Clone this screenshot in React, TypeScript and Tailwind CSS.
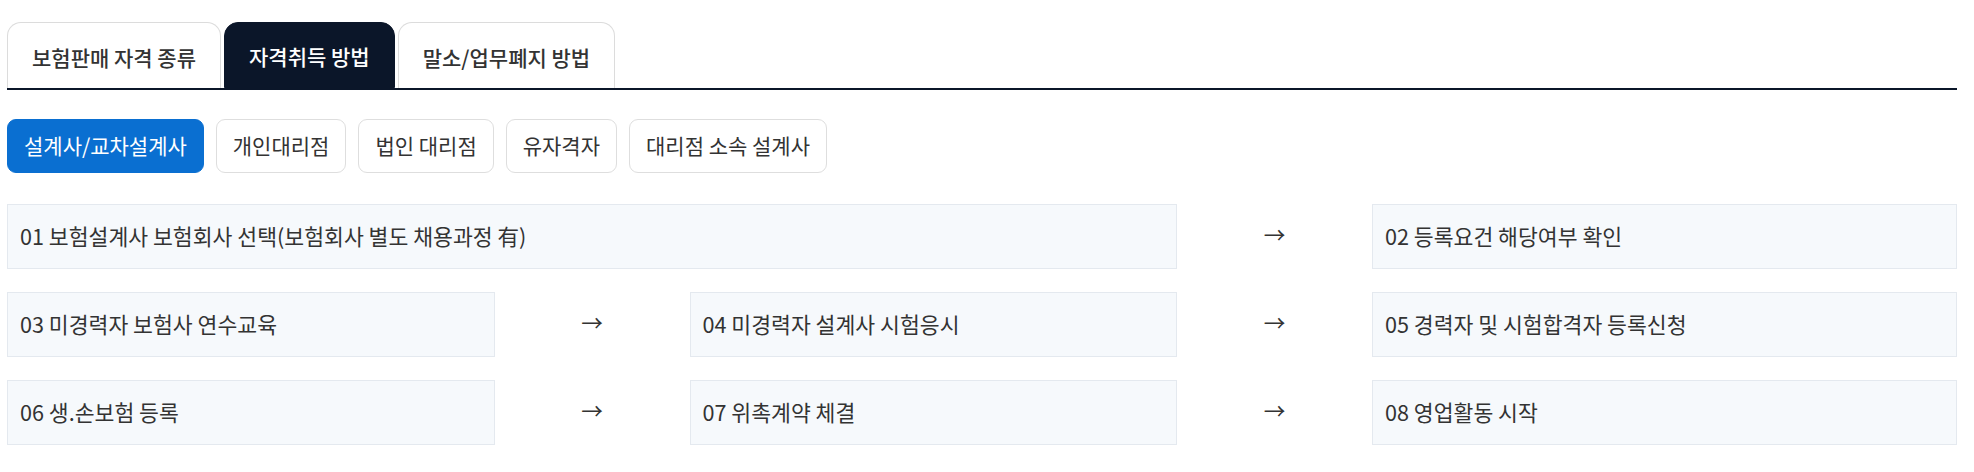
import React, { useState } from 'react';

const tabs = ['보험판매 자격 종류', '자격취득 방법', '말소/업무폐지 방법'];
const types = ['설계사/교차설계사', '개인대리점', '법인 대리점', '유자격자', '대리점 소속 설계사'];

const StepBox: React.FC<{ label: string; className?: string }> = ({ label, className = '' }) => (
  <div className={`h-[65px] flex items-center pl-3 bg-[#f6f9fc] border border-[#e4e9ef] text-[21.6px] text-[#333] ${className}`}>
    {label}
  </div>
);

const Arrow: React.FC = () => (
  <div className="h-[65px] flex items-center justify-center text-[21.6px] text-[#333] pb-1">→</div>
);

const App: React.FC = () => {
  const [activeTab, setActiveTab] = useState(1);
  const [activeType, setActiveType] = useState(0);

  return (
    <div className="min-h-screen bg-white font-['Noto_Sans_CJK_KR','Noto_Sans',sans-serif] pt-[22px]">
      <div className="ml-[7px] w-[1950px]">
        {/* top tabs */}
        <div className="flex gap-[3px] border-b-2 border-[#0b1629]">
          {tabs.map((tab, i) => (
            <button
              key={tab}
              onClick={() => setActiveTab(i)}
              className={`h-[66px] px-6 pt-1 flex items-center rounded-t-[14px] text-[21px] font-medium ${
                i === activeTab
                  ? 'bg-[#0b1629] text-white border border-[#0b1629] font-bold'
                  : 'bg-white text-[#333] border border-b-0 border-[#dcdcdc]'
              }`}
            >
              {tab}
            </button>
          ))}
        </div>

        {/* qualification types */}
        <div className="flex gap-3 mt-[29px]">
          {types.map((type, i) => (
            <button
              key={type}
              onClick={() => setActiveType(i)}
              className={`h-[54px] px-4 rounded-[9px] text-[21px] ${
                i === activeType
                  ? 'bg-[#0a6fd1] text-white border border-[#0a6fd1]'
                  : 'bg-white text-[#333] border border-[#dedede]'
              }`}
            >
              {type}
            </button>
          ))}
        </div>

        {/* process steps */}
        <div className="grid grid-cols-[5fr_2fr_5fr_2fr_6fr] gap-y-[23px] mt-[31px]">
          <StepBox label="01 보험설계사 보험회사 선택(보험회사 별도 채용과정 有)" className="col-span-3" />
          <Arrow />
          <StepBox label="02 등록요건 해당여부 확인" />

          <StepBox label="03 미경력자 보험사 연수교육" />
          <Arrow />
          <StepBox label="04 미경력자 설계사 시험응시" />
          <Arrow />
          <StepBox label="05 경력자 및 시험합격자 등록신청" />

          <StepBox label="06 생.손보험 등록" />
          <Arrow />
          <StepBox label="07 위촉계약 체결" />
          <Arrow />
          <StepBox label="08 영업활동 시작" />
        </div>
      </div>
    </div>
  );
};

export default App;
